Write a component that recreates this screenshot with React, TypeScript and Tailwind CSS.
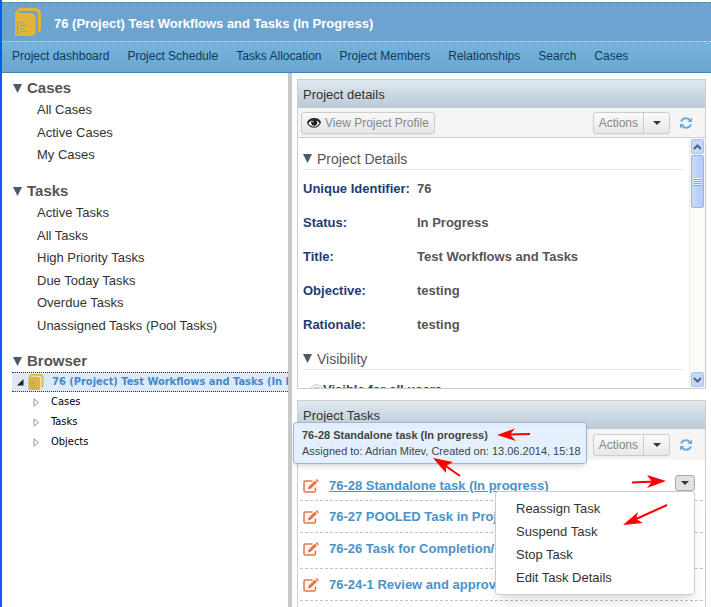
import React from 'react';

const NAV = [
  'Project dashboard',
  'Project Schedule',
  'Tasks Allocation',
  'Project Members',
  'Relationships',
  'Search',
  'Cases',
];

const CASES = ['All Cases', 'Active Cases', 'My Cases'];
const TASK_FILTERS = [
  'Active Tasks',
  'All Tasks',
  'High Priority Tasks',
  'Due Today Tasks',
  'Overdue Tasks',
  'Unassigned Tasks (Pool Tasks)',
];

const DETAILS: [string, string][] = [
  ['Unique Identifier:', '76'],
  ['Status:', 'In Progress'],
  ['Title:', 'Test Workflows and Tasks'],
  ['Objective:', 'testing'],
  ['Rationale:', 'testing'],
];

const MENU = ['Reassign Task', 'Suspend Task', 'Stop Task', 'Edit Task Details'];

function BookIcon({ className }: { className: string }) {
  return (
    <svg viewBox="0 0 26 28" className={className} aria-hidden="true">
      <path d="M0 5 4 0H20q6 0 6 6V22l-3 3V7q0-4-4-4H5L3 5Z" fill="#dfb63a" />
      <path d="M0 5H15q5.500 0 5.500 5.500V24q0 4-4 4H0Z" fill="#dfb63a" />
      <path d="M2.500 13v13M5 14.500h4M5 17.500h6M5 20.500h4M5 23.500h7" stroke="#86a6ab" strokeWidth="1.200" fill="none" />
    </svg>
  );
}

function Triangle() {
  return (
    <svg viewBox="0 0 9 9" className="h-[9px] w-[9px] shrink-0" aria-hidden="true">
      <path d="M0 0h9L4.500 9Z" fill="#4b5a66" />
    </svg>
  );
}

function Caret() {
  return (
    <svg viewBox="0 0 8 4" className="h-1 w-2" aria-hidden="true">
      <path d="M0 0h8L4 4Z" fill="#333" />
    </svg>
  );
}

function EyeIcon() {
  return (
    <svg viewBox="0 0 14 10" className="h-[10px] w-[14px]" aria-hidden="true">
      <path d="M.8 5.500Q3.500 1.500 7 1.500T13.200 5Q11 9.200 7 9.200T.8 5.500Z" fill="#fff" stroke="#33291f" strokeWidth="1.200" />
      <path d="M0.500 4.500Q3 .6 7.500 .8T13.500 4.500" fill="none" stroke="#222" strokeWidth="1.400" />
      <circle cx="7.200" cy="4.800" r="3" fill="#1c1c22" />
      <circle cx="6" cy="3.800" r=".8" fill="#ddd" />
    </svg>
  );
}

function RefreshIcon() {
  return (
    <svg viewBox="0 0 12 12" className="h-3 w-3" aria-hidden="true">
      <path d="M1.200 4.600Q2.200 1.200 6 1.200 8.200 1.200 9.800 3M10.800 7.400Q9.800 10.800 6 10.800 3.800 10.800 2.200 9" fill="none" stroke="#6aa9dc" strokeWidth="2" />
      <path d="M12 .5V5H7.500ZM0 11.500V7h4.500Z" fill="#6aa9dc" />
    </svg>
  );
}

function EditIcon() {
  return (
    <svg viewBox="0 0 16 14" className="h-[14px] w-4 shrink-0" aria-hidden="true">
      <path d="M9.500 2H2.500Q1 2 1 3.500v8Q1 13 2.500 13h8.500Q12.500 13 12.500 11.500V8.500" fill="none" stroke="#ec7442" strokeWidth="1.500" />
      <path d="M5 10.500 5.600 7.500 12 1.600 14 3.700 7.800 9.700Z" fill="#ec7442" />
      <path d="M12.700 1 13.700 0 16 2.200 14.800 3.200Z" fill="#ec7442" />
    </svg>
  );
}

function Section({ title, items }: { title: string; items: string[] }) {
  return (
    <section className="mb-[14px] px-[11px] last-of-type:mb-[13px]">
      <SideHeading title={title} />
      <ul>
        {items.map((t) => (
          <li key={t} className="flex h-[22px] items-center pl-6 even:h-[23px]">
            <a href="#" className="text-[13px] text-[#333]">{t}</a>
          </li>
        ))}
      </ul>
    </section>
  );
}

function SideHeading({ title }: { title: string }) {
  return (
    <h2 className="flex h-[22px] items-center gap-[5px] text-[15px] font-bold text-[#555]">
      <Triangle />
      {title}
    </h2>
  );
}

function ActionsGroup() {
  return (
    <div className="ml-auto flex items-center gap-[10px] pr-[13px]">
      <div className="flex h-[22px] rounded-[3px] border border-[#ccc] bg-linear-to-b from-[#fafafa] to-[#e8e8e8] shadow-xs">
        <button className="border-r border-[#ccc] px-[5px] text-[12px] text-[#888]">Actions</button>
        <button aria-label="Open actions" className="flex w-[25px] items-center justify-center">
          <Caret />
        </button>
      </div>
      <button aria-label="Refresh"><RefreshIcon /></button>
    </div>
  );
}

function PanelTitle({ title }: { title: string }) {
  return (
    <h2 className="flex h-7 items-center bg-linear-to-b from-[#dfe9ef] to-[#bac9d6] px-[5px] pt-px text-[13px] text-[#333]">
      {title}
    </h2>
  );
}

function SubHeading({ title }: { title: string }) {
  return (
    <h3 className="flex h-7 items-center gap-[5px] border-b border-[#e8e8e8] pt-[6px] text-[14px] text-[#555]">
      <Triangle />
      {title}
    </h3>
  );
}

function Scrollbar() {
  return (
    <div className="flex w-4 shrink-0 flex-col border-l border-[#eeede5] bg-[#fbfbf8] p-px" aria-hidden="true">
      <div className="flex h-[15px] items-center justify-center rounded-xs border border-[#a9c0f5] bg-[#c6d6fc]">
        <svg viewBox="0 0 9 6" className="h-[6px] w-[9px]"><path d="M1 5 4.500 1.500 8 5" fill="none" stroke="#4d6185" strokeWidth="2" /></svg>
      </div>
      <div className="mt-px flex h-[53px] flex-col items-center justify-center rounded-xs border border-[#98b3ee] bg-linear-to-r from-[#cad9fd] to-[#b4cafb]">
        <i className="h-px w-[7px] bg-[#eef4fe]" />
        <i className="h-px w-[7px] bg-[#7fa2f0]" />
        <i className="h-px w-[7px] bg-[#eef4fe]" />
        <i className="h-px w-[7px] bg-[#7fa2f0]" />
        <i className="h-px w-[7px] bg-[#eef4fe]" />
        <i className="h-px w-[7px] bg-[#7fa2f0]" />
        <i className="h-px w-[7px] bg-[#eef4fe]" />
        <i className="h-px w-[7px] bg-[#7fa2f0]" />
      </div>
      <div className="mt-auto flex h-[15px] items-center justify-center rounded-xs border border-[#a9c0f5] bg-[#c6d6fc]">
        <svg viewBox="0 0 9 6" className="h-[6px] w-[9px]"><path d="M1 1 4.500 4.500 8 1" fill="none" stroke="#4d6185" strokeWidth="2" /></svg>
      </div>
    </div>
  );
}

function TaskLink({ children, active }: { children: React.ReactNode; active?: boolean }) {
  return (
    <a
      href="#"
      className={
        active
          ? 'text-[13px] font-bold whitespace-nowrap text-[#4a92c8] underline'
          : 'text-[13px] font-bold whitespace-nowrap text-[#4a92c8]'
      }
    >
      {children}
    </a>
  );
}

function Annotations() {
  return (
    <svg className="pointer-events-none absolute top-0 left-0 z-30 h-[607px] w-[711px]" viewBox="2 0 711 607" aria-hidden="true">
      <g stroke="#fe0000" strokeWidth="2">
        <path d="M530 434 508 434.500M460 476 443 464M632 482.500 655 481.500M667 505 636 519" />
      </g>
      <g fill="#fe0000">
        <path d="M497 435 515 428.500 510 434.500 516 441Z" />
        <path d="M433 458 453 462 446 466 446 473Z" />
        <path d="M666 481 647 475 652 481.500 647 488Z" />
        <path d="M623 525 638 512 636 519 643 523Z" />
      </g>
    </svg>
  );
}

export default function App() {
  return (
    <div className="relative flex h-screen flex-col overflow-hidden border-l-2 border-[#0a5cf0] bg-white pt-[2px] font-['Liberation_Sans',Arial,sans-serif] leading-4">
      <header className="shrink-0">
        <div className="flex h-[39px] items-center gap-[13px] border-t border-dotted border-[#3f8f6a] bg-[#6ca3cf] pl-[13px]">
          <BookIcon className="h-7 w-[26px]" />
          <h1 className="pt-1 text-[13px] font-bold text-white">76 (Project) Test Workflows and Tasks (In Progress)</h1>
        </div>
        <nav className="flex h-8 items-center gap-[18px] border-t border-b border-t-[#d5e8f5] border-b-[#4780ad] bg-linear-to-b from-[#75b5dc] to-[#6ba5d1] pr-3 pl-[10px] [border-top-style:dotted]">
          {NAV.map((n) => (
            <a key={n} href="#" className="pb-[2px] text-[12px] whitespace-nowrap text-[#0d3a5c]">{n}</a>
          ))}
        </nav>
      </header>

      <div className="flex min-h-0 flex-1">
        <aside className="w-[286px] shrink-0 overflow-hidden pt-1">
          <Section title="Cases" items={CASES} />
          <Section title="Tasks" items={TASK_FILTERS} />
          <div className="px-[11px]"><SideHeading title="Browser" /></div>
          <div className="ml-[10px] font-['DejaVu_Sans_Condensed','DejaVu_Sans',sans-serif] text-[11px] text-black">
            <div className="flex h-5 items-center border-y border-dotted border-[#333] bg-[#dfe8f6] pl-[5px]">
              <svg viewBox="0 0 7 7" className="mr-1 h-[7px] w-[7px] shrink-0" aria-hidden="true"><path d="M6.500 0v6.500H0Z" fill="#222" /></svg>
              <BookIcon className="mr-2 h-4 w-4 shrink-0" />
              <a href="#" className="font-bold whitespace-nowrap text-[#3d8bcd]">76 (Project) Test Workflows and Tasks (In Progress)</a>
            </div>
            {['Cases', 'Tasks', 'Objects'].map((t) => (
              <div key={t} className="flex h-5 items-center gap-[11px] pl-[21px]">
                <svg viewBox="0 0 7 9" className="h-[9px] w-[7px]" aria-hidden="true"><path d="M1 .8v7.400L5.500 4.500Z" fill="#fff" stroke="#999" /></svg>
                <a href="#">{t}</a>
              </div>
            ))}
          </div>
        </aside>

        <div className="w-1 shrink-0 bg-[#c9c9c9]" />

        <main className="flex min-w-0 flex-1 flex-col gap-[11px] pt-[6px] pr-[5px] pl-[5px]">
          <section className="border border-[#d0cdc4]">
            <PanelTitle title="Project details" />
            <div className="flex h-[30px] items-center border-b border-[#d0cfca] bg-[#f5f5f5] pl-[3px]">
              <button className="flex h-[22px] items-center gap-1 rounded-[3px] border border-[#ccc] bg-linear-to-b from-[#f8f8f8] to-[#e6e6e6] px-[5px] text-[12px] text-[#888] shadow-xs">
                <EyeIcon />
                View Project Profile
              </button>
              <ActionsGroup />
            </div>
            <div className="flex h-[250px] overflow-hidden">
              <div className="min-w-0 flex-1 pt-1 pr-[5px] pl-[5px]">
                <SubHeading title="Project Details" />
                <dl className="pt-[2px]">
                  {DETAILS.map(([k, v]) => (
                    <div key={k} className="flex h-[34px] items-center text-[13px] font-bold">
                      <dt className="w-[114px] shrink-0 whitespace-nowrap text-[#1d3c73]">{k}</dt>
                      <dd className="text-[#555]">{v}</dd>
                    </div>
                  ))}
                </dl>
                <SubHeading title="Visibility" />
                <label className="flex items-center pt-3 pl-[7px] text-[13px] font-bold text-[#1d3c73]">
                  <input type="radio" name="visibility" defaultChecked disabled className="h-[13px] w-[13px]" />
                  Visible for all users
                </label>
              </div>
              <Scrollbar />
            </div>
          </section>

          <section className="flex min-h-0 flex-1 flex-col border border-b-0 border-[#d0cdc4]">
            <PanelTitle title="Project Tasks" />
            <div className="flex h-[31px] shrink-0 items-center bg-[#f5f5f5] pl-[15px]">
              <button className="flex items-center gap-[6px] text-[13px] text-[#888]">Active Tasks <Caret /></button>
              <ActionsGroup />
            </div>
            <ul className="px-[2px] pt-[9px]">
              <li className="relative flex h-8 items-center gap-[10px] border-b border-dashed border-[#c4c4c4] pt-[2px] pl-[3px]">
                <EditIcon />
                <TaskLink active>76-28 Standalone task (In progress)</TaskLink>
                <div role="tooltip" className="absolute bottom-[36px] -left-[7px] z-10 rounded-[3px] border border-[#a3b6cf] bg-[#e3effe]/95 py-1 pr-[5px] pl-2 text-[11px] whitespace-nowrap text-[#444] shadow-md">
                  <p className="font-bold">76-28 Standalone task (In progress)</p>
                  <p>Assigned to: Adrian Mitev, Created on: 13.06.2014, 15:18</p>
                </div>
                <div className="absolute top-[6px] right-[8px] z-20 flex flex-col items-end">
                  <button aria-label="Task actions" className="flex h-4 w-5 items-center justify-center rounded-[3px] border border-[#aaa] bg-[#e2e2e2]">
                    <Caret />
                  </button>
                  <div role="menu" className="flex w-[200px] flex-col rounded-[3px] border border-[#ccc] bg-white py-[5px] shadow-lg">
                    {MENU.map((m) => (
                      <button key={m} role="menuitem" className="h-[23px] pl-5 text-left text-[13px] text-[#333]">{m}</button>
                    ))}
                  </div>
                </div>
              </li>
              <li className="flex h-8 items-center gap-[10px] overflow-hidden border-b border-dashed border-[#c4c4c4] pl-[3px]">
                <EditIcon />
                <TaskLink>76-27 POOLED Task in Project</TaskLink>
              </li>
              <li className="flex h-9 items-center gap-[10px] overflow-hidden border-b border-dashed border-[#c4c4c4] pb-1 pl-[3px]">
                <EditIcon />
                <TaskLink>76-26 Task for Completion/</TaskLink>
              </li>
              <li className="flex h-8 items-center gap-[10px] overflow-hidden border-b border-dashed border-[#c4c4c4] pl-[3px]">
                <EditIcon />
                <TaskLink>76-24-1 Review and approve</TaskLink>
              </li>
            </ul>
          </section>
        </main>
      </div>
      <Annotations />
    </div>
  );
}
